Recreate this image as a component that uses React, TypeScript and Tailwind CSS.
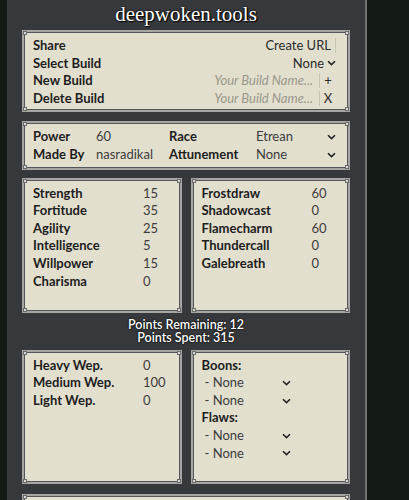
import React from "react";

const font = { fontFamily: "Lato, 'Open Sans', sans-serif" };

function Chevron() {
  return (
    <svg width="9" height="6" viewBox="0 0 9 6" className="shrink-0">
      <path d="M1 1.2 L4.5 4.6 L8 1.2" fill="none" stroke="#222" strokeWidth="1.6" />
    </svg>
  );
}

function Studs() {
  const s = "absolute w-[4px] h-[4px] bg-[#d8d8d8] border border-[#6a6a6a]";
  return (
    <>
      <span className={`${s} -left-[1px] -top-[1px]`} />
      <span className={`${s} -right-[1px] -top-[1px]`} />
      <span className={`${s} -left-[1px] -bottom-[1px]`} />
      <span className={`${s} -right-[1px] -bottom-[1px]`} />
    </>
  );
}

function Panel({ className = "", children }: { className?: string; children: React.ReactNode }) {
  return (
    <div className={`relative shrink-0 border-2 border-[#a7a6a2] bg-[#e3dfce] shadow-[inset_1px_1px_0_#55565a,inset_-1px_-1px_0_#55565a] ${className}`}>
      <Studs />
      {children}
    </div>
  );
}

function Sep() {
  return <span className="w-px h-[15px] bg-[#c9c5b5] inline-block" />;
}

const label = "font-bold text-[#1d1d1d]";
const value = "text-[#3c3c3c]";

export default function App() {
  const left = [
    ["Strength", "15"],
    ["Fortitude", "35"],
    ["Agility", "25"],
    ["Intelligence", "5"],
    ["Willpower", "15"],
    ["Charisma", "0"],
  ];
  const right = [
    ["Frostdraw", "60"],
    ["Shadowcast", "0"],
    ["Flamecharm", "60"],
    ["Thundercall", "0"],
    ["Galebreath", "0"],
  ];
  const weps = [
    ["Heavy Wep.", "0"],
    ["Medium Wep.", "100"],
    ["Light Wep.", "0"],
  ];
  const none = (
    <div className="flex items-center justify-between pl-[3px] w-[89px] h-[17.6px]">
      <span className={value}>- None</span>
      <Chevron />
    </div>
  );
  return (
    <div className="w-[409px] h-[500px] bg-[#131a14] flex overflow-hidden text-[13px] leading-[17.6px]" style={font}>
      <div className="ml-[7px] w-[360px] h-[500px] overflow-hidden bg-[#36383b] border-r-2 border-[#707172] flex flex-col px-[15px]">
        <div
          className="h-[30px] shrink-0 flex items-center justify-center pb-[2px] text-white text-[21px] leading-[30px] [text-shadow:0_0_2px_#000,1px_1px_1px_#000]"
          style={{ fontFamily: "'Liberation Serif', 'DejaVu Serif', serif" }}
        >
          deepwoken.tools
        </div>

        <Panel className="pl-[9px] pr-[12px] pt-[5px] pb-[3px]">
          <div className="flex items-center justify-between h-[17.6px]">
            <span className={label}>Share</span>
            <div className="flex items-center gap-[4px]">
              <span className="text-[#2a2a2a]">Create URL</span>
              <Sep />
            </div>
          </div>
          <div className="flex items-center justify-between h-[17.6px]">
            <span className={label}>Select Build</span>
            <div className="flex items-center gap-[3px]">
              <span className="text-[#2a2a2a]">None</span>
              <Chevron />
            </div>
          </div>
          <div className="flex items-center justify-between h-[17.6px]">
            <span className={label}>New Build</span>
            <div className="flex items-center">
              <span className="italic text-[#9a978c]">Your Build Name...</span>
              <span className="ml-[6px] flex"><Sep /></span>
              <span className="w-[16px] text-center text-[#2a2a2a]">+</span>
            </div>
          </div>
          <div className="flex items-center justify-between h-[17.6px]">
            <span className={label}>Delete Build</span>
            <div className="flex items-center">
              <span className="italic text-[#9a978c]">Your Build Name...</span>
              <span className="ml-[6px] flex"><Sep /></span>
              <span className="w-[16px] text-center text-[#2a2a2a]">X</span>
            </div>
          </div>
        </Panel>

        <Panel className="mt-[9px] pl-[9px] pr-[12px] pt-[5px] pb-[4px]">
          <div className="grid grid-cols-[63px_73px_87px_1fr] items-center">
            <span className={`${label} h-[17.6px]`}>Power</span>
            <span className={value}>60</span>
            <span className={label}>Race</span>
            <div className="flex items-center justify-between">
              <span className={value}>Etrean</span>
              <Chevron />
            </div>
            <span className={`${label} h-[17.6px]`}>Made By</span>
            <span className={value}>nasradikal</span>
            <span className={label}>Attunement</span>
            <div className="flex items-center justify-between">
              <span className={value}>None</span>
              <Chevron />
            </div>
          </div>
        </Panel>

        <div className="mt-[8px] shrink-0 grid grid-cols-2 gap-[9px]">
          <Panel className="h-[135px] pl-[9px] pt-[5px]">
            {left.map(([k, v]) => (
              <div key={k} className="grid grid-cols-[110px_1fr] h-[17.6px]">
                <span className={label}>{k}</span>
                <span className={value}>{v}</span>
              </div>
            ))}
          </Panel>
          <Panel className="h-[135px] pl-[9px] pt-[5px]">
            {right.map(([k, v]) => (
              <div key={k} className="grid grid-cols-[110px_1fr] h-[17.6px]">
                <span className={label}>{k}</span>
                <span className={value}>{v}</span>
              </div>
            ))}
          </Panel>
        </div>

        <div className="mt-[5px] shrink-0 flex flex-col items-center text-white text-[12.5px] font-semibold leading-[13.5px] [text-shadow:0_0_2px_#000,0_0_1px_#000]">
          <span>Points Remaining: 12</span>
          <span>Points Spent: 315</span>
        </div>

        <div className="mt-[5px] shrink-0 grid grid-cols-2 gap-[9px]">
          <Panel className="h-[134px] pl-[9px] pt-[5px]">
            {weps.map(([k, v]) => (
              <div key={k} className="grid grid-cols-[110px_1fr] h-[17.6px]">
                <span className={label}>{k}</span>
                <span className={value}>{v}</span>
              </div>
            ))}
          </Panel>
          <Panel className="h-[134px] pl-[9px] pt-[5px]">
            <div className={`${label} h-[17.6px]`}>Boons:</div>
            {none}
            {none}
            <div className={`${label} h-[17.6px]`}>Flaws:</div>
            {none}
            {none}
          </Panel>
        </div>

        <Panel className="mt-[10px] h-[40px]">
          <span />
        </Panel>
      </div>
    </div>
  );
}
